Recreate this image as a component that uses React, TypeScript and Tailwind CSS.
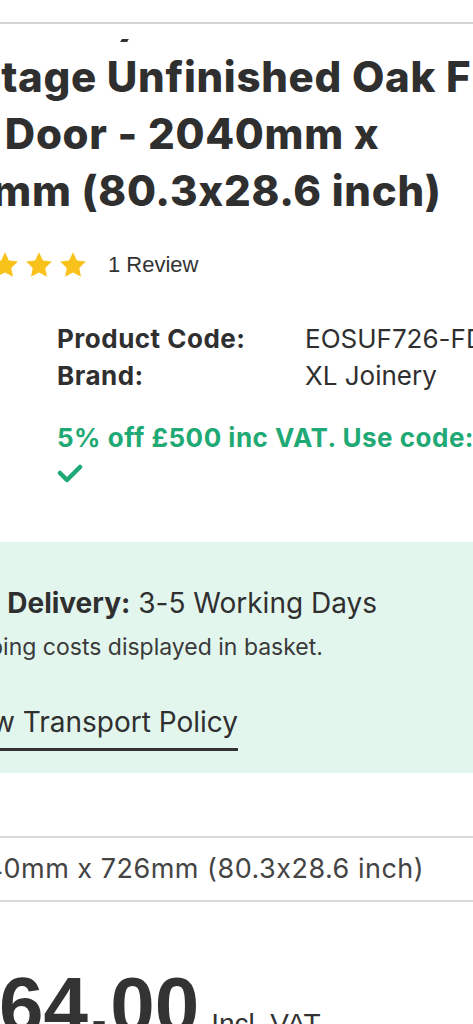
import React from 'react';

const Star: React.FC = () => (
    <svg className="h-[30px] w-[30px] flex-shrink-0" viewBox="0 0 24 24" fill="#f9c21a">
        <path d="M12 1.8l3.1 6.6 7.2.9-5.3 5 1.4 7.1L12 17.9l-6.4 3.5 1.4-7.1-5.3-5 7.2-.9z" />
    </svg>
);

const poppins = { fontFamily: 'Inter, "Noto Sans", sans-serif', fontFeatureSettings: '"calt" 0' };
const arial = { fontFamily: '"Liberation Sans", Arial, sans-serif' };

export default function App() {
    return (
        <div className="h-[1024px] w-[473px] overflow-hidden bg-white text-[#2f2f2f]" style={poppins}>
            {/* top rule */}
            <div className="mt-[22px] h-[2px] w-full bg-[#d4d4d4]" />

            {/* stray accent mark */}
            <div className="ml-[121px] mt-[15px] h-[3px] w-[7px] -skew-x-[30deg] bg-[#333]" />

            {/* Title */}
            <h1 className="mt-[6px] whitespace-nowrap text-[42px] font-extrabold leading-[57px] tracking-[0.7px]">
                <div className="-ml-[88px]">Heritage Unfinished Oak FD30</div>
                <div className="-ml-[86px]">Fire Door - 2040mm x</div>
                <div className="-ml-[89px]">726mm (80.3x28.6 inch)</div>
            </h1>

            {/* Rating */}
            <div className="mt-[29px] flex h-[33px] items-center">
                <div className="-ml-[78px] flex items-center gap-[4px]">
                    <Star />
                    <Star />
                    <Star />
                    <Star />
                    <Star />
                </div>
                <span className="ml-[20px] text-[22px] leading-[33px] text-[#333]" style={arial}>
                    1 Review
                </span>
            </div>

            {/* Product details */}
            <div className="mt-[39px] pl-[57px] text-[26px] leading-[37px]">
                <div className="grid grid-cols-[248px_1fr] whitespace-nowrap">
                    <span className="font-bold tracking-[0.5px]">Product Code:</span>
                    <span>EOSUF726-FD30</span>
                    <span className="font-bold tracking-[0.5px]">Brand:</span>
                    <span>XL Joinery</span>
                </div>
                <p className="mt-[25px] whitespace-nowrap font-bold tracking-[0.5px] text-[#1fa974]">5% off £500 inc VAT. Use code: SAVE5</p>
                <svg className="mt-[6px] block h-[22px] w-[26px]" viewBox="0 0 26 22" fill="none" stroke="#1fa974" strokeWidth={4.5} strokeLinecap="round" strokeLinejoin="round">
                    <path d="M3 11l7 7L23 5" />
                </svg>
            </div>

            {/* Delivery panel */}
            <div className="mt-[58px] h-[231px] bg-[#e3f6ee] pt-[41px]">
                <p className="-ml-[40px] whitespace-nowrap text-[28px] leading-[40px]">
                    <span className="font-bold">UK Delivery:</span> 3-5 Working Days
                </p>
                <p className="-ml-[59px] mt-[9px] whitespace-nowrap text-[23px] leading-[30px] text-[#3a3a3a]">
                    Shipping costs displayed in basket.
                </p>
                <div className="-ml-[50px] mt-[40px] inline-block whitespace-nowrap border-b-[3px] border-[#333] pb-[6px] text-[28px] leading-[40px]">
                    View Transport Policy
                </div>
            </div>

            {/* Size row */}
            <div className="mt-[63px] border-y-2 border-[#d8d8d8] py-[14px]">
                <p className="-ml-[49px] whitespace-nowrap text-[27px] leading-[34px] tracking-[0.5px] text-[#444]">
                    2040mm x 726mm (80.3x28.6 inch)
                </p>
            </div>

            {/* Price */}
            <div className="mt-[59px] flex items-baseline whitespace-nowrap" style={arial}>
                <span className="-ml-[90px] text-[80px] font-bold leading-[90px] text-[#333]">£164.00</span>
                <span className="ml-[12px] text-[28px] text-[#333]">Incl. VAT</span>
            </div>
        </div>
    );
}
